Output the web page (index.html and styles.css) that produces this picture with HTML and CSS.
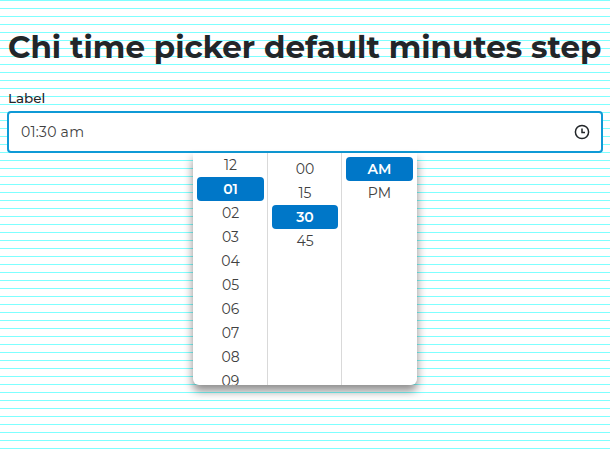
FILE: index.html
```html
<!DOCTYPE html>
<html lang="en">
<head>
<meta charset="utf-8">
<title>Chi time picker</title>
<link rel="stylesheet" href="styles.css">
</head>
<body>
<h1 class="title">Chi time picker default minutes step</h1>
<div class="field">
  <label class="label" for="time">Label</label>
  <div class="input-wrap">
    <input class="input" id="time" value="01:30 am">
    <svg class="clock" width="16" height="16" viewBox="0 0 16 16" aria-hidden="true"><circle cx="8" cy="8" r="6.6" fill="none" stroke="#222629" stroke-width="1.5"/><path d="M8 4.4V8.6H11" fill="none" stroke="#222629" stroke-width="1.5"/></svg>
  </div>
  <div class="popup">
    <div class="col col-hours">
      <div class="opt">12</div>
      <div class="opt on">01</div>
      <div class="opt">02</div>
      <div class="opt">03</div>
      <div class="opt">04</div>
      <div class="opt">05</div>
      <div class="opt">06</div>
      <div class="opt">07</div>
      <div class="opt">08</div>
      <div class="opt">09</div>
    </div>
    <div class="col col-minutes">
      <div class="opt">00</div>
      <div class="opt">15</div>
      <div class="opt on">30</div>
      <div class="opt">45</div>
    </div>
    <div class="col col-period">
      <div class="opt on">AM</div>
      <div class="opt">PM</div>
    </div>
  </div>
</div>
</body>
</html>
```
FILE: styles.css
```css
html { height: 100%; }
body {
  margin: 0;
  padding: 8px;
  min-height: 100%;
  box-sizing: border-box;
  overflow: hidden;
  font-family: "Montserrat", "Lato", "Liberation Sans", sans-serif;
  color: #222629;
  background: repeating-linear-gradient(to bottom, #7fffff 0, #7fffff 1px, #fff 1px, #fff 8px);
}
.title {
  margin: 18px 0 0;
  font-size: 31px;
  line-height: 42px;
  font-weight: 700;
  white-space: nowrap;
}
.field { position: relative; margin-top: 20px; }
.label {
  display: block;
  font-size: 13.5px;
  font-weight: 500;
  line-height: 20px;
  margin-bottom: 3px;
}
.input-wrap { position: relative; }
.input {
  display: block;
  width: calc(100% + 2px);
  height: 42px;
  margin-left: -1px;
  box-sizing: border-box;
  padding: 0 12px;
  border: 2px solid #0f9ad6;
  border-radius: 4px;
  background: #fff;
  font: 14px "Montserrat", "Lato", "Liberation Sans", sans-serif;
  letter-spacing: .25px;
  color: #414141;
  outline: none;
}
.clock { position: absolute; right: 12px; top: 13px; }
.popup {
  position: absolute;
  left: 185px;
  top: 65px;
  width: 224px;
  height: 232px;
  display: flex;
  background: #fff;
  border-radius: 0 0 6px 6px;
  box-shadow: 0 6px 10px rgba(0,0,0,.45);
  overflow: hidden;
}
.col { padding: 0 4px; box-sizing: border-box; border-left: 1px solid #d9d9d9; }
.col-hours { width: 74px; border-left: 0; padding-right: 3px; }
.col-minutes { width: 74px; padding-top: 4px; padding-right: 3px; }
.col-period { width: 76px; padding-top: 4px; }
.opt {
  height: 24px;
  display: flex;
  align-items: center;
  justify-content: center;
  font-size: 14px;
  border-radius: 4px;
  color: #414141;
}
.on { background: #0077c8; color: #fff; font-weight: 600; }
```
